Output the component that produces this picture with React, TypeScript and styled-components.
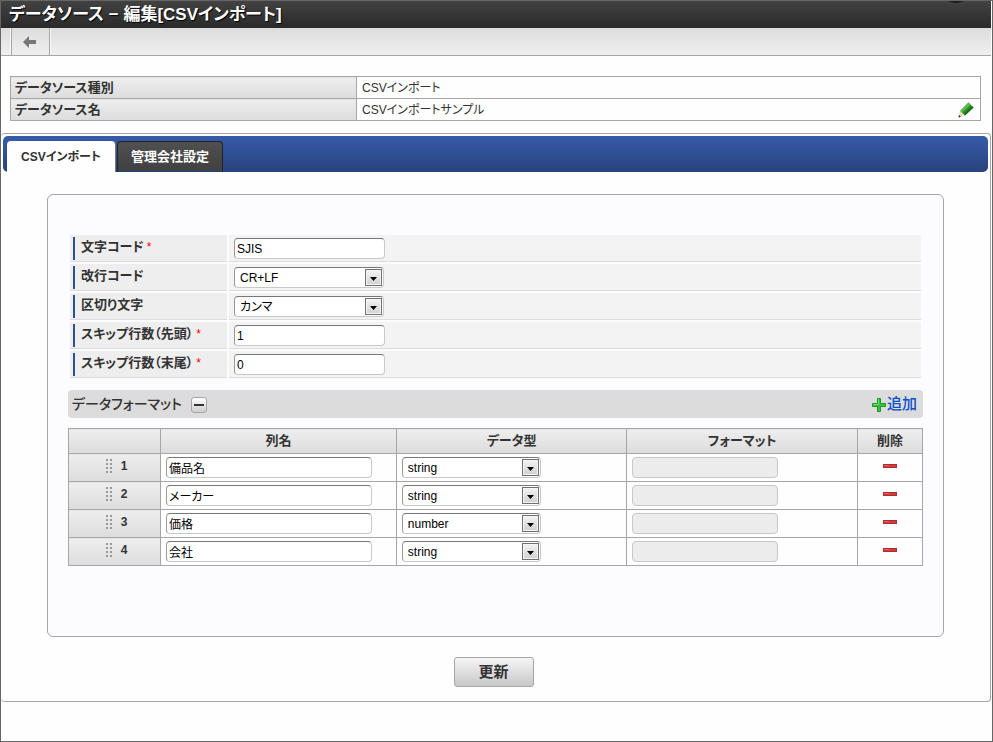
import React, { useState } from "react";
import styled, { createGlobalStyle, css } from "styled-components";

const LINE = "#a6a6a6";
const silver = "linear-gradient(#eeeeee, #dcdcdc)";

const GlobalStyle = createGlobalStyle`
  *, *::before, *::after { box-sizing: border-box; }
  body {
    margin: 0;
    background: #fefefe;
    color: #333;
    font-family: "Liberation Sans", "Noto Sans CJK JP", sans-serif;
    font-size: 12px;
    line-height: 20px;
    font-feature-settings: "palt";
  }
  input, select, button { font: inherit; font-feature-settings: inherit; color: inherit; margin: 0; }
`;

const Window = styled.div`
  min-height: 100vh;
  border: 1px solid #666;
  padding-right: 1px;
`;

const TitleBar = styled.header`
  position: relative;
  display: flex;
  align-items: center;
  height: 27px;
  padding: 0 8px;
  overflow: hidden;
  background: linear-gradient(#424242, #2a2a2a);
`;

const Title = styled.h1`
  margin: 0;
  color: #fff;
  font-size: 17px;
  line-height: 26px;
  font-weight: bold;
  white-space: nowrap;
  text-shadow: 1px 1px 1px #000;
`;

const TitleKnob = styled.span`
  position: absolute;
  top: -8px;
  right: 26px;
  width: 18px;
  height: 10px;
  border-radius: 50%;
  background: #1c1c1c;
`;

const Toolbar = styled.nav`
  display: flex;
  height: 28px;
  padding-left: 10px;
  border-bottom: 1px solid ${LINE};
  background: linear-gradient(#dcdcdc, #f0f0f0);
`;

const BackButton = styled.button`
  display: flex;
  align-items: center;
  justify-content: center;
  width: 39px;
  padding: 0 2px 0 0;
  border: solid ${LINE};
  border-width: 0 1px;
  background: none;
  box-shadow: -1px 0 #f8f8f8, 1px 0 #f8f8f8;
`;

const InfoTable = styled.table`
  width: calc(100% - 19px);
  margin: 20px 10px 0 9px;
  border-collapse: collapse;
  table-layout: fixed;

  th, td {
    height: 22px;
    padding: 0 6px 0 5px;
    border: 1px solid ${LINE};
    text-align: left;
  }
  th {
    width: 346px;
    background: ${silver};
    font-size: 13px;
    padding-left: 4px;
  }
`;

const InfoValue = styled.div`
  display: flex;
  align-items: center;
  justify-content: space-between;
`;

const IconButton = styled.button`
  display: inline-flex;
  align-items: center;
  justify-content: center;
  padding: 0;
  border: 0;
  background: none;
`;

const TabPanel = styled.main`
  margin-top: 12px;
  padding: 2px 2px 14px;
  border: 1px solid ${LINE};
  border-left: 0;
  border-radius: 4px;
`;

const TabList = styled.div`
  display: flex;
  align-items: flex-end;
  gap: 2px;
  height: 36px;
  padding-left: 4px;
  border-radius: 5px;
  background: linear-gradient(#365ba9, #28437c);
`;

const Tab = styled.button<{ $active: boolean }>`
  height: 31px;
  padding: 0;
  font-weight: bold;
  border-radius: 4px 4px 0 0;
  ${(p) =>
    p.$active
      ? css`
          width: 108px;
          border: 0;
          background: #fefefe;
          color: #333;
          box-shadow: 1px 0 #777;
          font-size: 12px;
        `
      : css`
          width: 106px;
          border: 1px solid #222;
          border-bottom-color: #28437c;
          background: linear-gradient(#505050, #404040);
          color: #fff;
          font-size: 13px;
        `}
`;

const Card = styled.section`
  margin: 22px 44px 20px;
  padding: 40px 20px 70px;
  border: 1px solid ${LINE};
  border-radius: 6px;
  background: #fcfcff;
`;

const Fields = styled.div`
  display: grid;
  gap: 2px;
  padding: 0 2px;
`;

const Field = styled.div`
  display: grid;
  grid-template-columns: 157px 1fr;
  gap: 2px;
  height: 27px;
`;

const LabelCell = styled.div`
  display: flex;
  padding: 2px 0 1px 3px;
  border-bottom: 1px solid #dcdcdc;
  background: #eee;
`;

const FieldLabel = styled.label`
  padding-left: 6px;
  border-left: 2px solid #2f4f93;
  font-size: 13px;
  font-weight: bold;
`;

const Required = styled.span`
  margin-left: 3px;
  color: #f00;
  font-size: 12px;
  font-weight: normal;
`;

const ValueCell = styled.div`
  padding: 3px 5px 0;
  border-bottom: 1px solid #dcdcdc;
  background: #f3f3f3;
`;

const control = css<{ $width: number }>`
  display: block;
  width: ${(p) => p.$width}px;
  height: 21px;
  border: 1px solid #c8c8c8;
  border-top-color: #777;
  border-left-color: #999;
  border-radius: 4px;
  background: #fff;
  color: #000;
  line-height: 18px;
`;

const TextInput = styled.input<{ $width: number }>`
  ${control}
  padding: 0 2px;
  &:disabled {
    border-color: #c8c8c8;
    background: #ececec;
  }
`;

const SelectBox = styled.div`
  position: relative;
  width: fit-content;
`;

const NativeSelect = styled.select<{ $width: number }>`
  ${control}
  appearance: none;
  padding: 0 22px 0 5px;
`;

const SelectArrow = styled.span`
  position: absolute;
  top: 2px;
  right: 2px;
  display: flex;
  align-items: center;
  justify-content: center;
  width: 17px;
  height: 17px;
  padding-top: 2px;
  border: 1px solid #707070;
  background: linear-gradient(#f4f4f4, #d0d0d0);
  box-shadow: inset 0 0 0 1px #f4f4f4;
  pointer-events: none;
`;

const SectionBar = styled.div`
  display: flex;
  align-items: center;
  height: 28px;
  margin: 12px 0 10px;
  padding: 0 6px 0 4px;
  border-radius: 4px;
  background: #dcdcdc;
`;

const SectionTitle = styled.h2`
  margin: 0 9px 0 0;
  font-size: 14px;
  line-height: 20px;
  font-weight: 500;
`;

const CollapseButton = styled.button`
  display: flex;
  align-items: center;
  justify-content: center;
  width: 16px;
  height: 16px;
  margin-top: 2px;
  padding: 0;
  border: 1px solid ${LINE};
  border-radius: 3px;
  background: linear-gradient(#fff, #ccc);
`;

const AddLink = styled.a`
  display: flex;
  align-items: center;
  gap: 1px;
  margin-left: auto;
  color: #0b50c8;
  font-size: 15px;
  font-weight: 500;
  text-decoration: none;

  svg { margin-top: 2px; }
`;

const FormatTable = styled.table`
  width: 100%;
  border-collapse: collapse;
  table-layout: fixed;

  th, td {
    height: 28px;
    padding: 0 5px;
    border: 1px solid ${LINE};
  }
  th {
    background: ${silver};
    font-size: 13px;
  }
  thead th { height: 25px; }
  td { background: #fefefe; }
`;

const IndexColumn = styled.col`
  width: 92px;
`;

const NameColumn = styled.col`
  width: auto;
`;

const TypeColumn = styled.col`
  width: 27%;
`;

const DeleteColumn = styled.col`
  width: 65px;
`;

const RowHandle = styled.div`
  display: flex;
  align-items: center;
  justify-content: center;
  gap: 9px;
  padding: 0 0 4px 4px;
  font-size: 12px;
`;

const DeleteCell = styled.td`
  line-height: 0;
  text-align: center;

  button { margin-bottom: 4px; }
`;

const Actions = styled.div`
  display: flex;
  justify-content: center;
  padding-right: 4px;
`;

const SubmitButton = styled.button`
  width: 80px;
  height: 30px;
  padding: 0;
  border: 1px solid ${LINE};
  border-radius: 3px;
  background: linear-gradient(#f5f5f5, #c8c8c8);
  font-size: 15px;
  font-weight: bold;
`;

const BackIcon = () => (
  <svg width="14" height="12" viewBox="0 0 14 12" aria-hidden="true">
    <path d="M0 6 6 0v4h7v4H6v4z" fill="#777" />
  </svg>
);

const PencilIcon = () => (
  <svg width="16" height="16" viewBox="0 0 16 16" aria-hidden="true">
    <path d="M10.5.5 15.5 5.5 7 13.5 2 9z" fill="#2d9426" />
    <path d="M10.5.5 12.5 2.5 3.8 10.7 2 9z" fill="#5fb948" />
    <path d="m14 4 1.5 1.5L7 13.5 5.4 12z" fill="#16711a" />
    <path d="m2 9 5 4.5L.5 15.5z" fill="#ead8b6" />
    <path d="m1.1 13 1.8 1.8-2.5.8z" fill="#222" />
  </svg>
);

const PlusIcon = () => (
  <svg width="14" height="14" viewBox="0 0 14 14" aria-hidden="true">
    <path d="M5.5.5h3v5h5v3h-5v5h-3v-5h-5v-3h5z" fill="#2fc43a" stroke="#1c962a" />
    <path d="M6.5 1.5v5h-5" fill="none" stroke="#78dd70" />
  </svg>
);

const DeleteIcon = () => (
  <svg width="14" height="4" viewBox="0 0 14 4" aria-hidden="true">
    <rect x=".5" y=".5" width="13" height="3" fill="#d13b3b" stroke="#b32c2c" />
    <path d="M1 1.5h5" stroke="#e26464" />
  </svg>
);

const GripIcon = () => (
  <svg width="6" height="14" viewBox="0 0 6 14" fill="#999" aria-hidden="true">
    {[0, 4, 8, 12].map((y) => (
      <React.Fragment key={y}>
        <rect width="2" height="2" y={y} />
        <rect width="2" height="2" x="4" y={y} />
      </React.Fragment>
    ))}
  </svg>
);

type SelectProps = { id?: string; label?: string; width: number; initial: string; options: string[] };

const Select = ({ id, label, width, initial, options }: SelectProps) => (
  <SelectBox>
    <NativeSelect id={id} aria-label={label} $width={width} defaultValue={initial}>
      {options.map((o) => (
        <option key={o}>{o}</option>
      ))}
    </NativeSelect>
    <SelectArrow>
      <svg width="7" height="4" viewBox="0 0 7 4" aria-hidden="true">
        <path d="M0 0h7L3.5 4z" fill="#000" />
      </svg>
    </SelectArrow>
  </SelectBox>
);

const fields = [
  { id: "charset", label: "文字コード", required: true, value: "SJIS" },
  { id: "newline", label: "改行コード", value: "CR+LF", options: ["CR+LF", "LF", "CR"] },
  { id: "delimiter", label: "区切り文字", value: "カンマ", options: ["カンマ", "タブ"] },
  { id: "skip-head", label: "スキップ行数（先頭）", required: true, value: "1" },
  { id: "skip-tail", label: "スキップ行数（末尾）", required: true, value: "0" },
];

const columns = [
  { name: "備品名", type: "string" },
  { name: "メーカー", type: "string" },
  { name: "価格", type: "number" },
  { name: "会社", type: "string" },
];

const tabs = ["CSVインポート", "管理会社設定"];

export default function App() {
  const [active, setActive] = useState(0);
  return (
    <>
      <GlobalStyle />
      <Window>
        <TitleBar>
          <Title>データソース − 編集[CSVインポート]</Title>
          <TitleKnob />
        </TitleBar>
        <Toolbar>
          <BackButton type="button" aria-label="戻る">
            <BackIcon />
          </BackButton>
        </Toolbar>
        <InfoTable>
          <tbody>
            <tr>
              <th scope="row">データソース種別</th>
              <td>CSVインポート</td>
            </tr>
            <tr>
              <th scope="row">データソース名</th>
              <td>
                <InfoValue>
                  CSVインポートサンプル
                  <IconButton type="button" aria-label="編集">
                    <PencilIcon />
                  </IconButton>
                </InfoValue>
              </td>
            </tr>
          </tbody>
        </InfoTable>
        <TabPanel>
          <TabList role="tablist">
            {tabs.map((t, i) => (
              <Tab key={t} type="button" role="tab" aria-selected={i === active} $active={i === active} onClick={() => setActive(i)}>
                {t}
              </Tab>
            ))}
          </TabList>
          <Card>
            <Fields>
              {fields.map((f) => (
                <Field key={f.id}>
                  <LabelCell>
                    <FieldLabel htmlFor={f.id}>
                      {f.label}
                      {f.required && <Required>*</Required>}
                    </FieldLabel>
                  </LabelCell>
                  <ValueCell>
                    {f.options ? (
                      <Select id={f.id} width={150} initial={f.value} options={f.options} />
                    ) : (
                      <TextInput id={f.id} $width={151} defaultValue={f.value} />
                    )}
                  </ValueCell>
                </Field>
              ))}
            </Fields>
            <SectionBar>
              <SectionTitle>データフォーマット</SectionTitle>
              <CollapseButton type="button" aria-label="折りたたむ">
                <svg width="10" height="2" aria-hidden="true">
                  <rect width="10" height="2" fill="#333" />
                </svg>
              </CollapseButton>
              <AddLink href="#add">
                <PlusIcon />
                追加
              </AddLink>
            </SectionBar>
            <FormatTable>
              <colgroup>
                <IndexColumn />
                <NameColumn />
                <TypeColumn />
                <TypeColumn />
                <DeleteColumn />
              </colgroup>
              <thead>
                <tr>
                  <th aria-label="順序" />
                  <th scope="col">列名</th>
                  <th scope="col">データ型</th>
                  <th scope="col">フォーマット</th>
                  <th scope="col">削除</th>
                </tr>
              </thead>
              <tbody>
                {columns.map((c, i) => (
                  <tr key={c.name}>
                    <th scope="row">
                      <RowHandle>
                        <GripIcon />
                        {i + 1}
                      </RowHandle>
                    </th>
                    <td>
                      <TextInput aria-label={`列名 ${i + 1}`} $width={206} defaultValue={c.name} />
                    </td>
                    <td>
                      <Select label={`データ型 ${i + 1}`} width={139} initial={c.type} options={["string", "number", "date"]} />
                    </td>
                    <td>
                      <TextInput aria-label={`フォーマット ${i + 1}`} $width={146} disabled />
                    </td>
                    <DeleteCell>
                      <IconButton type="button" aria-label={`削除 ${i + 1}`}>
                        <DeleteIcon />
                      </IconButton>
                    </DeleteCell>
                  </tr>
                ))}
              </tbody>
            </FormatTable>
          </Card>
          <Actions>
            <SubmitButton type="submit">更新</SubmitButton>
          </Actions>
        </TabPanel>
      </Window>
    </>
  );
}
